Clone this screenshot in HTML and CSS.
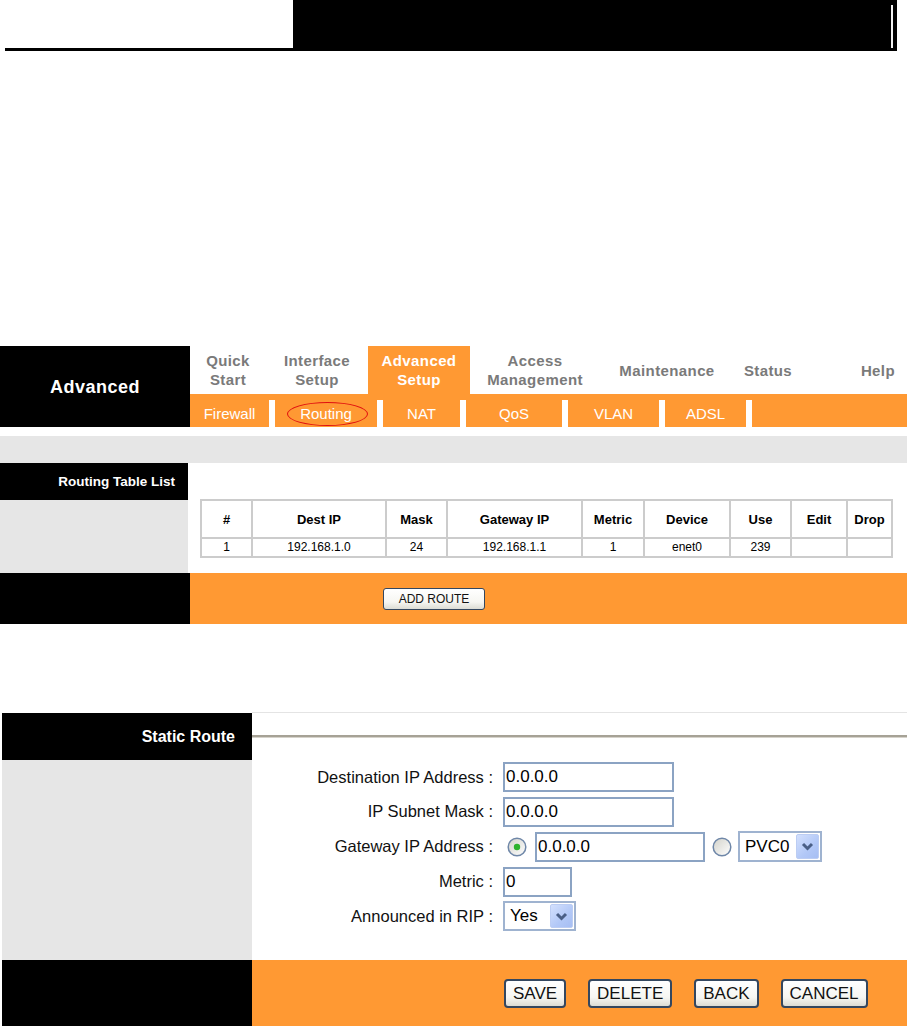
FILE: index.html
```html
<!DOCTYPE html>
<html lang="en">
  <head>
    <meta charset="UTF-8" />
    <title>Advanced Setup - Routing</title>
    <link rel="stylesheet" href="styles.css">
  </head>
  <body>
    <div class="topbar">
      <div class="top-left"></div>
      <div class="top-right"><span class="top-mark"></span></div>
    </div>

    <div class="nav">
      <div class="nav-title">Advanced</div>
      <div class="nav-main">
        <div class="tabs">
          <div class="tab">Quick<br>Start</div>
          <div class="tab">Interface<br>Setup</div>
          <div class="tab active">Advanced<br>Setup</div>
          <div class="tab">Access<br>Management</div>
          <div class="tab">Maintenance</div>
          <div class="tab">Status</div>
          <div class="tab tab-help">Help</div>
        </div>
        <div class="subtabs">
          <div class="subtab">Firewall</div>
          <div class="subtab current">Routing<span class="ring"></span></div>
          <div class="subtab">NAT</div>
          <div class="subtab">QoS</div>
          <div class="subtab">VLAN</div>
          <div class="subtab">ADSL</div>
          <div class="subtab"></div>
        </div>
      </div>
    </div>

    <div class="grey-bar"></div>

    <div class="section">
      <div class="side">
        <div class="side-title">Routing Table List</div>
        <div class="side-fill"></div>
      </div>
      <div class="content route-list">
        <table class="route-table">
          <tr>
            <th>#</th>
            <th>Dest IP</th>
            <th>Mask</th>
            <th>Gateway IP</th>
            <th>Metric</th>
            <th>Device</th>
            <th>Use</th>
            <th>Edit</th>
            <th>Drop</th>
          </tr>
          <tr>
            <td>1</td>
            <td>192.168.1.0</td>
            <td>24</td>
            <td>192.168.1.1</td>
            <td>1</td>
            <td>enet0</td>
            <td>239</td>
            <td></td>
            <td></td>
          </tr>
        </table>
      </div>
    </div>
    <div class="actions">
      <div class="actions-side"></div>
      <div class="actions-main add-route">
        <button class="btn btn-small">ADD ROUTE</button>
      </div>
    </div>

    <div class="section static">
      <div class="side">
        <div class="side-title">Static Route</div>
        <div class="side-fill"></div>
      </div>
      <div class="content">
        <div class="rule-row"><div class="rule"></div></div>
        <div class="form">
          <label class="form-label">Destination IP Address :</label>
          <div class="form-control"><input class="field field-ip" type="text" value="0.0.0.0"></div>

          <label class="form-label">IP Subnet Mask :</label>
          <div class="form-control"><input class="field field-ip" type="text" value="0.0.0.0"></div>

          <label class="form-label">Gateway IP Address :</label>
          <div class="form-control gateway">
            <svg class="radio" width="20" height="20" viewBox="0 0 20 20">
              <defs>
                <linearGradient id="radioOn" x1="0" y1="0" x2="1" y2="1">
                  <stop offset="0" stop-color="#d2d2ca"/>
                  <stop offset="1" stop-color="#ffffff"/>
                </linearGradient>
              </defs>
              <circle cx="10" cy="10" r="8.8" fill="url(#radioOn)" stroke="#6f87a8" stroke-width="1.5"/>
              <circle cx="10" cy="10" r="3.2" fill="#2db32d"/>
            </svg>
            <input class="field field-gw" type="text" value="0.0.0.0">
            <svg class="radio" width="20" height="20" viewBox="0 0 20 20">
              <defs>
                <linearGradient id="radioOff" x1="0" y1="0" x2="1" y2="1">
                  <stop offset="0" stop-color="#d2d2ca"/>
                  <stop offset="1" stop-color="#ffffff"/>
                </linearGradient>
              </defs>
              <circle cx="10" cy="10" r="8.8" fill="url(#radioOff)" stroke="#6f87a8" stroke-width="1.5"/>
            </svg>
            <div class="select select-pvc">
              <span class="select-value">PVC0</span>
              <span class="select-btn">
                <svg width="13" height="9" viewBox="0 0 13 9"><path d="M2 2 L6.5 6.5 L11 2" fill="none" stroke="#4a5f86" stroke-width="3"/></svg>
              </span>
            </div>
          </div>

          <label class="form-label">Metric :</label>
          <div class="form-control"><input class="field field-metric" type="text" value="0"></div>

          <label class="form-label">Announced in RIP :</label>
          <div class="form-control">
            <div class="select select-rip">
              <span class="select-value">Yes</span>
              <span class="select-btn">
                <svg width="13" height="9" viewBox="0 0 13 9"><path d="M2 2 L6.5 6.5 L11 2" fill="none" stroke="#4a5f86" stroke-width="3"/></svg>
              </span>
            </div>
          </div>
        </div>
      </div>
    </div>
    <div class="actions static-actions">
      <div class="actions-side"></div>
      <div class="actions-main form-buttons">
        <button class="btn">SAVE</button>
        <button class="btn">DELETE</button>
        <button class="btn">BACK</button>
        <button class="btn">CANCEL</button>
      </div>
    </div>
  </body>
</html>
```

FILE: styles.css
```css
* {
  margin: 0;
  padding: 0;
  box-sizing: border-box;
}

body {
  font-family: "Liberation Sans", Arial, sans-serif;
  background-color: #ffffff;
  color: #000;
  width: 907px;
}

/* page header */
.topbar {
  display: flex;
  height: 51px;
}

.top-left {
  width: 288px;
  margin-left: 5px;
  border-bottom: 3px solid #000;
}

.top-right {
  width: 604px;
  background-color: #000;
  display: flex;
  justify-content: flex-end;
  padding: 5px 4px 3px 0;
}

.top-mark {
  width: 2px;
  background-color: #f2f2f2;
}

/* navigation */
.nav {
  display: flex;
  margin-top: 295px;
}

.nav-title {
  width: 190px;
  height: 81px;
  background-color: #000;
  color: #fff;
  font-size: 18px;
  font-weight: bold;
  letter-spacing: 0.5px;
  display: flex;
  align-items: center;
  justify-content: center;
  padding-top: 2px;
}

.nav-main {
  flex: 1;
}

.tabs {
  display: grid;
  grid-template-columns: 76px 102px 102px 130px 134px 68px 1fr;
  height: 48px;
}

.tab {
  display: flex;
  align-items: center;
  justify-content: center;
  text-align: center;
  font-size: 15px;
  font-weight: bold;
  letter-spacing: 0.4px;
  line-height: 19px;
  color: #7a7a7a;
}

.tab.active {
  background-color: #ff9933;
  color: #fff;
}

.tab-help {
  justify-content: flex-end;
  padding-right: 12px;
}

.subtabs {
  display: grid;
  grid-template-columns: 79px 102px 77px 96px 91px 81px 1fr;
  column-gap: 6px;
  height: 33px;
  background-color: #fff;
  border-top: 6px solid #ff9933;
}

.subtab {
  position: relative;
  background-color: #ff9933;
  color: #fff;
  font-size: 15px;
  display: flex;
  align-items: center;
  justify-content: center;
}

.ring {
  position: absolute;
  left: 12px;
  right: 9px;
  top: 2px;
  bottom: 1px;
  border: 1.5px solid #e01010;
  border-radius: 50%;
}

.grey-bar {
  height: 27px;
  margin-top: 9px;
  background-color: #e6e6e6;
}

/* side + content sections */
.section {
  display: flex;
}

.side {
  width: 190px;
  display: flex;
  flex-direction: column;
}

.side-title {
  height: 37px;
  background-color: #000;
  color: #fff;
  font-size: 13.5px;
  font-weight: bold;
  text-align: right;
  padding-right: 13px;
  line-height: 37px;
}

.side-fill {
  flex: 1;
  background-color: #e6e6e6;
}

.content {
  flex: 1;
  background-color: #fff;
}

.route-list {
  padding: 36px 14px 15px 12px;
}

.route-table {
  width: 691px;
  border-collapse: collapse;
  table-layout: fixed;
  font-size: 12px;
  text-align: center;
}

.route-table th,
.route-table td {
  border: 2px solid #cccccc;
  padding: 0;
}

.route-table th {
  height: 38px;
  font-size: 13px;
  font-weight: bold;
}

.route-table td {
  height: 19px;
  line-height: 15px;
}

.route-table th:nth-child(1) { width: 51px; }
.route-table th:nth-child(2) { width: 134px; }
.route-table th:nth-child(3) { width: 61px; }
.route-table th:nth-child(4) { width: 135px; }
.route-table th:nth-child(5) { width: 62px; }
.route-table th:nth-child(6) { width: 86px; }
.route-table th:nth-child(7) { width: 61px; }
.route-table th:nth-child(8) { width: 56px; }
.route-table th:nth-child(9) { width: 45px; }

.actions {
  display: flex;
  height: 51px;
}

.actions-side {
  width: 190px;
  background-color: #000;
}

.actions-main {
  flex: 1;
  background-color: #ff9933;
  display: flex;
  align-items: center;
}

.add-route {
  padding-left: 193px;
}

.btn {
  font-family: "Liberation Sans", Arial, sans-serif;
  font-size: 17px;
  height: 29px;
  padding: 0 7px;
  color: #111;
  border: 2px solid #34475f;
  border-radius: 4px;
  background: linear-gradient(#ffffff, #f6f6f2 65%, #dcdcd4);
}

.btn-small {
  font-size: 12px;
  width: 102px;
  height: 22px;
  border-width: 1px;
  border-radius: 3px;
}

/* static route */
.static {
  margin-top: 88px;
  margin-left: 2px;
}

.static .side {
  width: 250px;
  border-top: 1px solid #fff;
}

.static .side-title {
  height: 47px;
  line-height: 47px;
  font-size: 16px;
  padding-right: 17px;
}

.static .content {
  border-top: 1px solid #e4e4e4;
}

.rule-row {
  height: 47px;
  display: flex;
  align-items: center;
}

.rule {
  flex: 1;
  border-top: 2px solid #a6a296;
  border-bottom: 1px solid #d6d3cb;
}

.form {
  display: grid;
  grid-template-columns: 241px auto;
  column-gap: 10px;
  row-gap: 4.5px;
  padding: 2px 0 29px;
}

.form-label {
  height: 30px;
  font-size: 16.5px;
  text-align: right;
  display: flex;
  align-items: center;
  justify-content: flex-end;
  color: #111;
}

.form-control {
  display: flex;
  align-items: center;
}

.field {
  height: 30px;
  border: 2px solid #8ba3c3;
  font-family: "Liberation Sans", Arial, sans-serif;
  font-size: 17px;
  padding-left: 1px;
  color: #000;
  background: #fff;
}

.field-ip {
  width: 171px;
}

.field-gw {
  width: 170px;
  margin: 0 7px 0 8px;
}

.field-metric {
  width: 69px;
}

.radio {
  display: block;
}

.gateway .radio:first-child {
  margin-left: 4px;
}

.select {
  display: flex;
  align-items: stretch;
  height: 31px;
  border: 2px solid #9fb3d0;
  background: #fff;
  padding: 1px;
  font-size: 17px;
}

.select-pvc {
  width: 84px;
  margin-left: 6px;
}

.select-rip {
  width: 73px;
  height: 30px;
}

.select-value {
  flex: 1;
  display: flex;
  align-items: center;
  padding-left: 4px;
}

.select-btn {
  width: 23px;
  display: flex;
  align-items: center;
  justify-content: center;
  border-radius: 2px;
  background: linear-gradient(135deg, #d3e0fd, #b2c8f7 60%, #a6bef3);
  border: 1px solid #bccdf3;
}

.static-actions {
  height: 67px;
  margin-left: 2px;
}

.static-actions .actions-side {
  width: 250px;
}

.form-buttons {
  padding-left: 252px;
  gap: 22px;
}
```
